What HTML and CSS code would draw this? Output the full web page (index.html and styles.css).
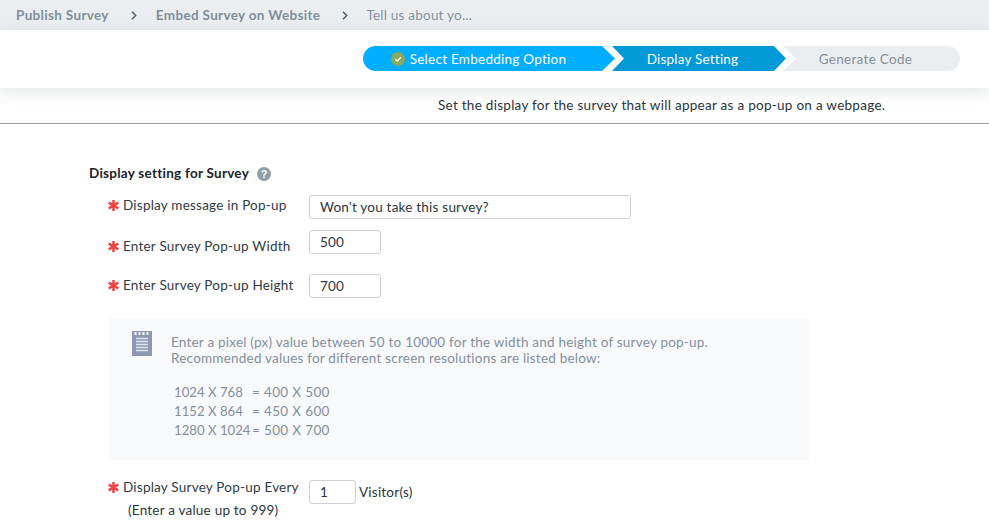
FILE: index.html
```html
<!DOCTYPE html>
<html lang="en">
<head>
<meta charset="utf-8">
<title>Embed Survey on Website</title>
<link rel="stylesheet" href="styles.css">
</head>
<body>
<nav class="crumbs">
  <span class="crumb">Publish Survey</span>
  <span class="sep"><svg width="6" height="9" viewBox="0 0 6 9"><path d="M1 .7l3.700 3.800-3.700 3.800" fill="none" stroke="#4f5861" stroke-width="1.400"/></svg></span>
  <span class="crumb">Embed Survey on Website</span>
  <span class="sep"><svg width="6" height="9" viewBox="0 0 6 9"><path d="M1 .7l3.700 3.800-3.700 3.800" fill="none" stroke="#4f5861" stroke-width="1.400"/></svg></span>
  <span class="crumb crumb-last">Tell us about yo...</span>
</nav>
<header class="steps-bar">
  <div class="steps">
    <div class="step step-done">
      <svg class="check" width="14" height="14" viewBox="0 0 14 14"><circle cx="7" cy="7" r="7" fill="#8aa95b"/><path d="M4.200 7.200l2 1.900 3.600-3.900" fill="none" stroke="#fff" stroke-width="1.400"/></svg>
      <span>Select Embedding Option</span>
    </div>
    <div class="step step-current">Display Setting</div>
    <div class="step step-todo">Generate Code</div>
  </div>
</header>
<p class="intro">Set the display for the survey that will appear as a pop-up on a webpage.</p>
<main class="form">
  <h2 class="heading">Display setting for Survey
    <svg class="help" width="14" height="14" viewBox="0 0 14 14"><circle cx="7" cy="7" r="7" fill="#8f9fa9"/><text x="7" y="10.800" text-anchor="middle" class="help-mark">?</text></svg>
  </h2>
  <div class="row row-msg">
    <label class="label"><svg class="star" width="11" height="11" viewBox="0 0 11 11"><path d="M5.500 0v11M.7 2.700l9.600 5.600M10.300 2.700l-9.600 5.600" stroke="#ee4444" stroke-width="2.500"/></svg>Display message in Pop-up</label>
    <input class="field field-wide" value="Won't you take this survey?">
  </div>
  <div class="row row-width">
    <label class="label"><svg class="star" width="11" height="11" viewBox="0 0 11 11"><path d="M5.500 0v11M.7 2.700l9.600 5.600M10.300 2.700l-9.600 5.600" stroke="#ee4444" stroke-width="2.500"/></svg>Enter Survey Pop-up Width</label>
    <input class="field field-num" value="500">
  </div>
  <div class="row row-height">
    <label class="label"><svg class="star" width="11" height="11" viewBox="0 0 11 11"><path d="M5.500 0v11M.7 2.700l9.600 5.600M10.300 2.700l-9.600 5.600" stroke="#ee4444" stroke-width="2.500"/></svg>Enter Survey Pop-up Height</label>
    <input class="field field-num" value="700">
  </div>
  <section class="note">
    <svg class="note-icon" width="20" height="25" viewBox="0 0 20 25">
      <rect width="20" height="25" fill="#8d99b3"/>
      <path d="M3.500 1v3M7.500 1v3M11.500 1v3M15.500 1v3" stroke="#fff" stroke-width="2"/>
      <path d="M4 7.500h12M4 10.500h12M4 13.500h12M4 16.500h12M4 19.500h12" stroke="#dfe3ea" stroke-width="1.400"/>
    </svg>
    <div class="note-body">
      <p class="note-text">Enter a pixel (px) value between 50 to 10000 for the width and height of survey pop-up.<br>Recommended values for different screen resolutions are listed below:</p>
      <table class="res">
        <tr><td class="res-a">1024 X 768</td><td class="res-b">= 400 X 500</td></tr>
        <tr><td class="res-a">1152 X 864</td><td class="res-b">= 450 X 600</td></tr>
        <tr><td class="res-a">1280 X 1024</td><td class="res-b">= 500 X 700</td></tr>
      </table>
    </div>
  </section>
  <div class="row row-every">
    <div class="every-label">
      <label class="label label-tight"><svg class="star" width="11" height="11" viewBox="0 0 11 11"><path d="M5.500 0v11M.7 2.700l9.600 5.600M10.300 2.700l-9.600 5.600" stroke="#ee4444" stroke-width="2.500"/></svg>Display Survey Pop-up Every</label>
      <div class="hint">(Enter a value up to 999)</div>
    </div>
    <input class="field field-small" value="1">
    <span class="suffix">Visitor(s)</span>
  </div>
</main>
</body>
</html>
```
FILE: styles.css
```css
* { box-sizing: border-box; }
html, body { margin: 0; height: 531px; overflow: hidden; }
body { font: 13.5px/16px Lato, "Liberation Sans", sans-serif; color: #2b3440; background: #fff; letter-spacing: .22px; }

.crumbs { height: 30px; background: #ebeef1; display: flex; align-items: center; padding-left: 16px; }
.crumb { font-weight: 700; color: #7f8e9c; letter-spacing: .33px; }
.crumb-last { font-weight: 400; color: #84919d; letter-spacing: .22px; margin-left: -1px; }
.sep { width: 47px; display: flex; justify-content: center; padding-left: 3px; }

.steps-bar { height: 58px; padding: 16px 29px 0 0; display: flex; justify-content: flex-end; box-shadow: 0 4px 14px rgba(60, 70, 80, .14); position: relative; }
.steps { display: flex; height: 25px; }
.step { display: flex; align-items: center; justify-content: center; color: #fff; height: 25px; }
.step-done { width: 252px; background: #00aeff; border-radius: 13px 0 0 13px; clip-path: polygon(0 0, 239px 0, 100% 50%, 239px 100%, 0 100%); padding-right: 21px; gap: 5px; letter-spacing: .26px; }
.step-current { width: 174px; margin-left: -3px; background: #0299d8; clip-path: polygon(0 0, 162px 0, 100% 50%, 162px 100%, 0 100%, 12px 50%); padding-right: 13px; }
.step-todo { width: 177px; margin-left: -3px; background: #ebeef1; color: #868f9b; border-radius: 0 13px 13px 0; clip-path: polygon(0 0, 100% 0, 100% 100%, 0 100%, 13px 50%); padding-right: 12px; letter-spacing: .3px; }

.intro { margin: 0; height: 36px; padding: 9px 0 0 438px; border-bottom: 1px solid #99a1a8; letter-spacing: .275px; }

.form { padding: 41px 0 0 89px; }
.heading { margin: 0 0 14px; font-size: 13.5px; line-height: 16px; font-weight: 700; letter-spacing: .26px; color: #1c232b; display: flex; align-items: center; gap: 8px; height: 16px; }
.help { margin-top: 2px; }
.help-mark { font: 700 11px "Liberation Sans", sans-serif; fill: #fff; letter-spacing: 0; }

.row { display: flex; padding-left: 19px; }
.label { width: 201px; display: flex; align-items: center; gap: 4px; flex: none; color: #2f3a46; height: 16px; }
.star { flex: none; }
.field { height: 24px; border: 1px solid #ccd0d4; border-radius: 3px; padding: 0 10px; font: inherit; letter-spacing: inherit; color: #2b3440; background: #fff; outline: none; display: block; }
.field-wide { width: 322px; }
.field-num { width: 72px; }
.field-small { width: 47px; }

.row-msg { height: 35px; }
.row-msg .label { margin-top: 2px; }
.row-width { height: 44px; }
.row-width .label { margin-top: 8px; }
.row-height { height: 44px; }
.row-height .label { margin-top: 3px; }

.note { width: 700px; height: 142px; margin-left: 20px; background: #f8f9fb; display: flex; padding: 13px 0 0 23px; color: #848f9b; }
.note-icon { flex: none; }
.note-body { padding: 3px 0 0 19px; }
.note-text { margin: 0 0 17px; }
.res { border-collapse: collapse; margin-left: 3px; }
.res td { padding: 0; height: 19px; line-height: 19px; white-space: nowrap; }
.res-a { width: 78px; font-size: 13.2px; letter-spacing: 0; }
.res-b { letter-spacing: .35px; }

.row-every { margin-top: 20px; }
.every-label { width: 201px; flex: none; margin-top: -1px; }
.label-tight { width: auto; }
.hint { margin: 7px 0 0 20px; }
.suffix { margin: 4px 0 0 3px; }
```
